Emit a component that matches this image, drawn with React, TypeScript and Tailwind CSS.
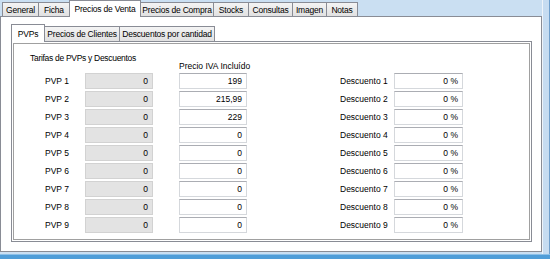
import React from "react";

const outerTabs = [
  { label: "General", w: "w-[37px]" },
  { label: "Ficha", w: "w-[32px]" },
  { label: "Precios de Venta", w: "w-[72px]", sel: true },
  { label: "Precios de Compra", w: "w-[74px]" },
  { label: "Stocks", w: "w-[36px]" },
  { label: "Consultas", w: "w-[45px]" },
  { label: "Imagen", w: "w-[35px]" },
  { label: "Notas", w: "w-[32px]" },
];

const innerTabs = [
  { label: "PVPs", w: "w-[34px]", sel: true },
  { label: "Precios de Clientes", w: "w-[76px]" },
  { label: "Descuentos por cantidad", w: "w-[96px]" },
];

const precios = ["199", "215,99", "229", "0", "0", "0", "0", "0", "0"];

function Tab({ label, w, sel, small }: { label: string; w: string; sel?: boolean; small?: boolean }) {
  if (sel) {
    return (
      <div
        className={`${w} ${small ? "h-[18px]" : "h-[17px]"} relative z-10 -mb-px flex shrink-0 items-center justify-center overflow-hidden whitespace-nowrap border border-b-0 border-[#898c95] bg-white tracking-[-0.2px] first:ml-0 -ml-px`}
      >
        {label}
      </div>
    );
  }
  return (
    <div
      className={`${w} ${small ? "h-[15px]" : "h-[14px]"} flex shrink-0 items-center justify-center overflow-hidden whitespace-nowrap border border-b-0 border-[#898c95] bg-gradient-to-b from-[#f4f4f4] to-[#e1e1e1] tracking-[-0.2px] first:ml-0 -ml-px`}
    >
      {label}
    </div>
  );
}

export default function App() {
  return (
    <div className="flex h-[259px] w-[550px] flex-col overflow-hidden bg-[#cadff2] font-['Liberation_Sans',Arial,sans-serif] text-[8.5px] leading-[12px] text-black">
      <div className="flex h-[254px]">
        <div className="flex w-[542px] flex-col">
          {/* outer tab strip */}
          <div className="flex h-[16px] items-end pl-[2px]">
            {outerTabs.map((t) => (
              <Tab key={t.label} {...t} />
            ))}
          </div>
          {/* outer panel */}
          <div className="flex h-[236px] flex-col border border-[#898c95] bg-white pl-[10px] pt-[7px]">
            {/* inner tab strip */}
            <div className="flex h-[17px] items-end">
              {innerTabs.map((t) => (
                <Tab key={t.label} {...t} small />
              ))}
            </div>
            {/* inner panel */}
            <div className="h-[201px] w-[521px] border border-[#898c95] bg-white p-px">
              <div className="h-full w-full border border-[#a0a0a0]">
                {/* header */}
                <div className="flex h-[29px] items-start">
                  <div className="w-[165px] whitespace-nowrap pl-[16px] pt-[8px] tracking-[-0.3px]">
                    Tarifas de PVPs y Descuentos
                  </div>
                  <div className="pt-[16px]">Precio IVA Incluído</div>
                </div>
                {/* rows */}
                <div className="flex flex-col gap-[2px]">
                  {precios.map((p, i) => (
                    <div key={i} className="flex h-[16px] items-center pl-[31px]">
                      <div className="w-[40px]">PVP {i + 1}</div>
                      <div className="flex h-[16px] w-[68px] items-center justify-end border border-[#d2d2d2] bg-[#e3e3e3] pr-[4px]">
                        0
                      </div>
                      <div className="w-[26px]" />
                      <div className="flex h-[16px] w-[68px] items-center justify-end border border-[#d5d8dc] border-t-[#abadb3] bg-white pr-[4px]">
                        {p}
                      </div>
                      <div className="w-[93px]" />
                      <div className="w-[54px]">Descuento {i + 1}</div>
                      <div className="flex h-[16px] w-[69px] items-center justify-end border border-[#d5d8dc] border-t-[#abadb3] bg-white pr-[4px]">
                        0 %
                      </div>
                    </div>
                  ))}
                </div>
              </div>
            </div>
          </div>
        </div>
        {/* right frame */}
        <div className="flex-1 border-l border-l-[#eef4fa] border-r border-r-[#6f9fcc] bg-[#c6dcf1]" />
      </div>
      <div className="h-[5px] border-t border-[#8cc0e8] bg-[#4f9dd8]" />
    </div>
  );
}
